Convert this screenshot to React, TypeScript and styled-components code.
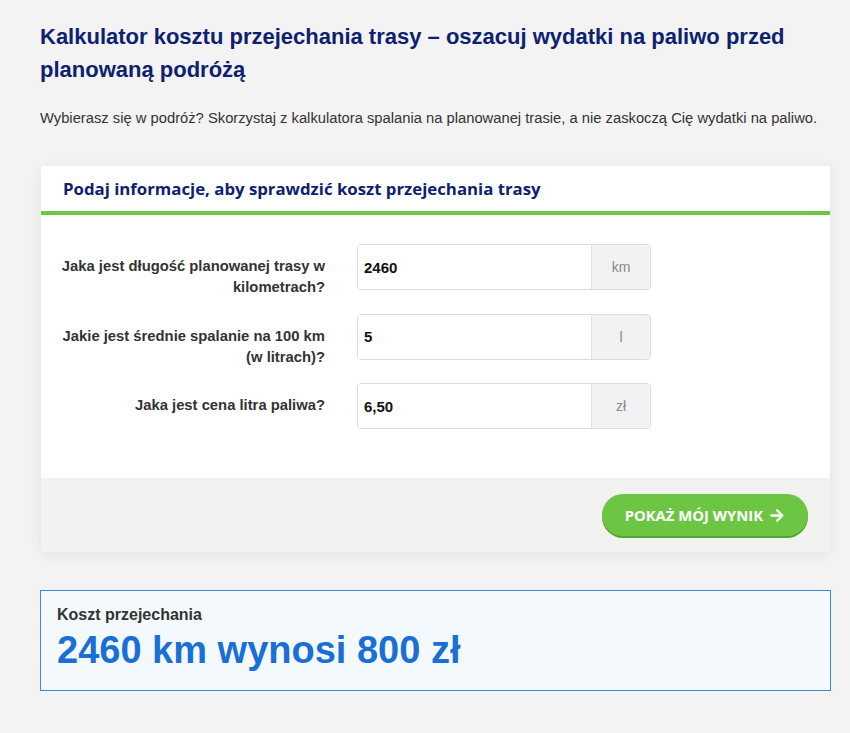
import React from "react";
import styled, { createGlobalStyle } from "styled-components";

const GlobalStyle = createGlobalStyle`
  html, body {
    margin: 0;
    padding: 0;
    background: #f3f3f3;
  }
  body {
    font-family: "Liberation Sans", Arial, sans-serif;
    color: #333;
  }
`;

const fields = [
  { label: "Jaka jest długość planowanej trasy w kilometrach?", value: "2460", unit: "km" },
  { label: "Jakie jest średnie spalanie na 100 km (w litrach)?", value: "5", unit: "l" },
  { label: "Jaka jest cena litra paliwa?", value: "6,50", unit: "zł" },
];

const Page = styled.main`
  width: 790px;
  padding: 20px 0 40px 40px;
`;

const Title = styled.h1`
  margin: 0;
  font-family: "Liberation Sans", Arial, sans-serif;
  font-weight: 700;
  font-size: 22px;
  line-height: 33px;
  color: #0e2170;
`;

const Lead = styled.p`
  margin: 21px 0 0;
  font-size: 14.75px;
  line-height: 22px;
  color: #333;
  white-space: nowrap;
`;

const Card = styled.section`
  margin: 37px 0 0 1px;
  background: #fff;
  box-shadow: 0 2px 14px rgba(0, 0, 0, 0.07);
`;

const CardHeader = styled.h2`
  margin: 0;
  padding: 10px 22px 10px;
  border-bottom: 4px solid #6cc644;
  font-family: "Open Sans", sans-serif;
  font-weight: 700;
  font-size: 16.8px;
  line-height: 25px;
  color: #0e2170;
`;

const Form = styled.div`
  display: flex;
  flex-direction: column;
  gap: 15.5px;
  padding: 29px 0 49px 16px;
`;

const Row = styled.label`
  display: grid;
  grid-template-columns: 268px 294px;
  column-gap: 32px;
  align-items: start;
`;

const Label = styled.span`
  padding-top: 12px;
  font-size: 14.8px;
  font-weight: 700;
  line-height: 21px;
  color: #333;
  text-align: right;
`;

const InputGroup = styled.div`
  display: flex;
  height: 46px;
  border: 1px solid #dcdcdc;
  border-radius: 4px;
  overflow: hidden;
  box-sizing: border-box;
`;

const Input = styled.input`
  flex: 1;
  min-width: 0;
  border: 0;
  outline: none;
  padding: 0 6px;
  font-family: "Liberation Sans", Arial, sans-serif;
  font-size: 15px;
  font-weight: 700;
  color: #111;
  background: #fff;
`;

const Addon = styled.span`
  width: 58px;
  display: flex;
  align-items: center;
  justify-content: center;
  background: #f2f2f2;
  border-left: 1px solid #e2e2e2;
  font-size: 14px;
  color: #888;
`;

const CardFooter = styled.div`
  display: flex;
  justify-content: flex-end;
  padding: 16px 22px 16px;
  background: #f2f2f1;
`;

const Button = styled.button`
  display: flex;
  align-items: center;
  gap: 7px;
  height: 42px;
  padding: 0 24px 0 23px;
  border: 0;
  border-radius: 21px;
  background: #6cc644;
  box-shadow: 0 2px 0 #55a533;
  font-family: "Open Sans", sans-serif;
  font-weight: 700;
  font-size: 14.8px;
  color: #fff;
  cursor: pointer;
`;

const Result = styled.section`
  margin-top: 38px;
  width: 791px;
  box-sizing: border-box;
  padding: 13px 16px 18px;
  border: 1px solid #3c86d4;
  background: #f4f9fd;
`;

const ResultLabel = styled.div`
  font-size: 16px;
  font-weight: 700;
  line-height: 22px;
  color: #333;
`;

const ResultValue = styled.div`
  margin-top: 2px;
  font-size: 38px;
  font-weight: 700;
  line-height: 44px;
  color: #1a6fd6;
`;

const ArrowIcon = () => (
  <svg width="14" height="15" viewBox="0 0 448 512" fill="currentColor">
    <path d="M190.5 66.9l22.2-22.2c9.4-9.4 24.6-9.4 33.9 0L441 239c9.4 9.4 9.4 24.6 0 33.9L246.6 467.3c-9.4 9.4-24.6 9.4-33.9 0l-22.2-22.2c-9.5-9.5-9.3-25 .4-34.3L311.4 296H24c-13.3 0-24-10.7-24-24v-32c0-13.3 10.7-24 24-24h287.4L190.9 101.2c-9.8-9.3-10-24.8-.4-34.3z" />
  </svg>
);

export default function App() {
  return (
    <>
      <GlobalStyle />
      <Page>
        <Title>
          Kalkulator kosztu przejechania trasy – oszacuj wydatki na paliwo przed planowaną podróżą
        </Title>
        <Lead>
          Wybierasz się w podróż? Skorzystaj z kalkulatora spalania na planowanej trasie, a nie
          zaskoczą Cię wydatki na paliwo.
        </Lead>

        <Card>
          <CardHeader>Podaj informacje, aby sprawdzić koszt przejechania trasy</CardHeader>
          <Form>
            {fields.map((field) => (
              <Row key={field.unit}>
                <Label>{field.label}</Label>
                <InputGroup>
                  <Input defaultValue={field.value} />
                  <Addon>{field.unit}</Addon>
                </InputGroup>
              </Row>
            ))}
          </Form>
          <CardFooter>
            <Button type="button">
              POKAŻ MÓJ WYNIK <ArrowIcon />
            </Button>
          </CardFooter>
        </Card>

        <Result>
          <ResultLabel>Koszt przejechania</ResultLabel>
          <ResultValue>2460 km wynosi 800 zł</ResultValue>
        </Result>
      </Page>
    </>
  );
}
